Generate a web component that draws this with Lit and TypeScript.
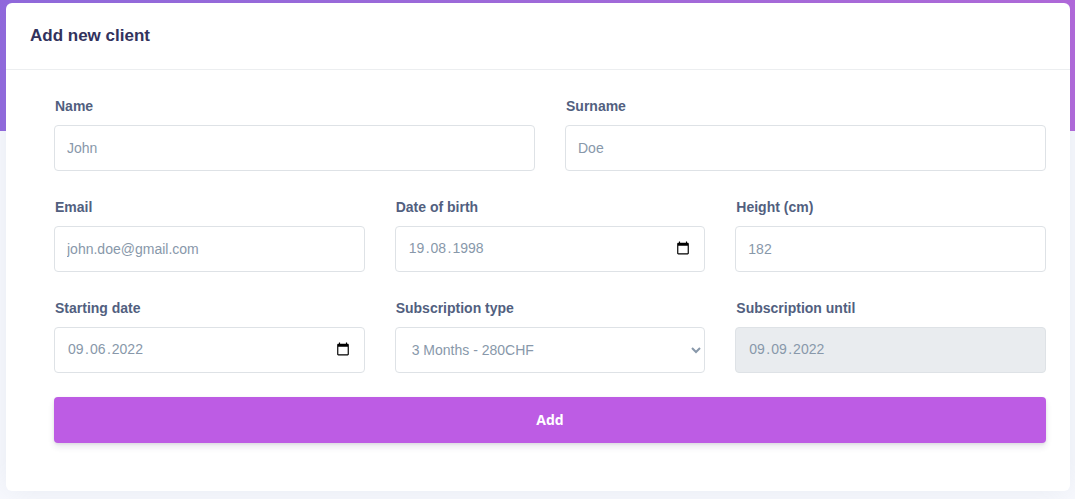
import { LitElement, html, css, svg } from "lit";
import { customElement, property } from "lit/decorators.js";

const calendarIcon = svg`
  <path fill="currentColor" d="M20 3h-1V1h-2v2H7V1H5v2H4c-1.1 0-2 .9-2 2v16c0 1.1.9 2 2 2h16c1.1 0 2-.9 2-2V5c0-1.1-.9-2-2-2zm0 18H4V8h16v13z" />
`;

@customElement("date-field")
export class DateField extends LitElement {
  @property() name = "";
  @property() label = "";
  /** Date as dd.mm.yyyy */
  @property() value = "";
  @property({ type: Boolean }) disabled = false;

  static styles = css`
    :host {
      display: block;
    }
    .caption {
      display: block;
      margin: 0 0 6px 1px;
      font-size: 14px;
      font-weight: 600;
      line-height: 25px;
      color: #525f7f;
    }
    .box {
      box-sizing: border-box;
      display: flex;
      align-items: center;
      height: 46px;
      padding: 0 12px 2px;
      border: 1px solid #dee2e6;
      border-radius: 4px;
      background: #fff;
      font-size: 14px;
      line-height: 20px;
      color: #8898aa;
    }
    .box.off {
      background: #e9ecef;
    }
    .part {
      box-sizing: border-box;
      width: 18px;
      height: 20px;
      margin: 0;
      padding: 0 1px;
      border: 0;
      outline: 0;
      background: transparent;
      font: inherit;
      color: inherit;
    }
    .part.year {
      width: 36px;
    }
    .picker {
      display: flex;
      margin: 0 0 0 auto;
      padding: 0 2px;
      border: 0;
      background: transparent;
      color: #000;
    }
    .icon {
      width: 14px;
      height: 14px;
    }
  `;

  render() {
    const [day, month, year] = this.value.split(".");
    return html`
      <label class="caption" for="day">${this.label}</label>
      <div class="box ${this.disabled ? "off" : ""}" role="group" aria-label=${this.label}>
        <input class="part" id="day" aria-label="Day" maxlength="2" .value=${day} ?disabled=${this.disabled} />.
        <input class="part" aria-label="Month" maxlength="2" .value=${month} ?disabled=${this.disabled} />.
        <input class="part year" aria-label="Year" maxlength="4" .value=${year} ?disabled=${this.disabled} />
        ${this.disabled
          ? ""
          : html`<button class="picker" type="button" aria-label="Open calendar">
              <svg class="icon" viewBox="0 0 24 24">${calendarIcon}</svg>
            </button>`}
      </div>
    `;
  }
}

@customElement("app-root")
export class AppRoot extends LitElement {
  static styles = css`
    :host {
      display: block;
      box-sizing: border-box;
      min-height: 100vh;
      padding: 3px 5px 8px 6px;
      background: linear-gradient(87deg, #9066de, #b166db) top / 100% 131px no-repeat #f8f9fe;
      font-family: "Liberation Sans", Arial, sans-serif;
    }
    .card {
      border-radius: 6px;
      background: #fff;
      box-shadow: 0 0 32px 0 rgba(136, 152, 170, 0.15);
    }
    .head {
      padding: 20px 24px;
      border-bottom: 1px solid #eceef0;
    }
    .title {
      margin: 0;
      font-size: 17px;
      font-weight: 600;
      line-height: 26px;
      color: #32325d;
    }
    .form {
      display: grid;
      gap: 24px;
      padding: 24px 24px 48px 48px;
    }
    .row {
      display: grid;
      grid-auto-flow: column;
      grid-auto-columns: minmax(0, 1fr);
      gap: 30px;
    }
    .caption {
      display: block;
      margin: 0 0 6px 1px;
      font-size: 14px;
      font-weight: 600;
      line-height: 25px;
      color: #525f7f;
    }
    .control {
      box-sizing: border-box;
      display: block;
      width: 100%;
      height: 46px;
      padding: 0 12px;
      border: 1px solid #dee2e6;
      border-radius: 4px;
      background: #fff;
      font-family: inherit;
      font-size: 14px;
      color: #8898aa;
    }
    .control::placeholder {
      color: #8898aa;
    }
    .submit {
      height: 46px;
      padding: 0 12px 2px;
      border: 0;
      border-radius: 4px;
      background: #bd5ce4;
      box-shadow: 0 4px 6px rgba(50, 50, 93, 0.11), 0 1px 3px rgba(0, 0, 0, 0.08);
      font-family: "Open Sans", sans-serif;
      font-size: 14px;
      font-weight: 700;
      color: #fff;
    }
  `;

  private textField(id: string, label: string, placeholder: string, type = "text") {
    return html`<div>
      <label class="caption" for=${id}>${label}</label>
      <input class="control" id=${id} name=${id} type=${type} placeholder=${placeholder} />
    </div>`;
  }

  render() {
    return html`
      <main class="card">
        <header class="head"><h3 class="title">Add new client</h3></header>
        <form class="form" @submit=${(e: Event) => e.preventDefault()}>
          <div class="row">
            ${this.textField("name", "Name", "John")}
            ${this.textField("surname", "Surname", "Doe")}
          </div>
          <div class="row">
            ${this.textField("email", "Email", "john.doe@gmail.com", "email")}
            <date-field label="Date of birth" value="19.08.1998"></date-field>
            ${this.textField("height", "Height (cm)", "182", "number")}
          </div>
          <div class="row">
            <date-field label="Starting date" value="09.06.2022"></date-field>
            <div>
              <label class="caption" for="subscription">Subscription type</label>
              <select class="control" id="subscription" name="subscription">
                <option>3 Months - 280CHF</option>
              </select>
            </div>
            <date-field label="Subscription until" value="09.09.2022" disabled></date-field>
          </div>
          <button class="submit" type="submit">Add</button>
        </form>
      </main>
    `;
  }
}
